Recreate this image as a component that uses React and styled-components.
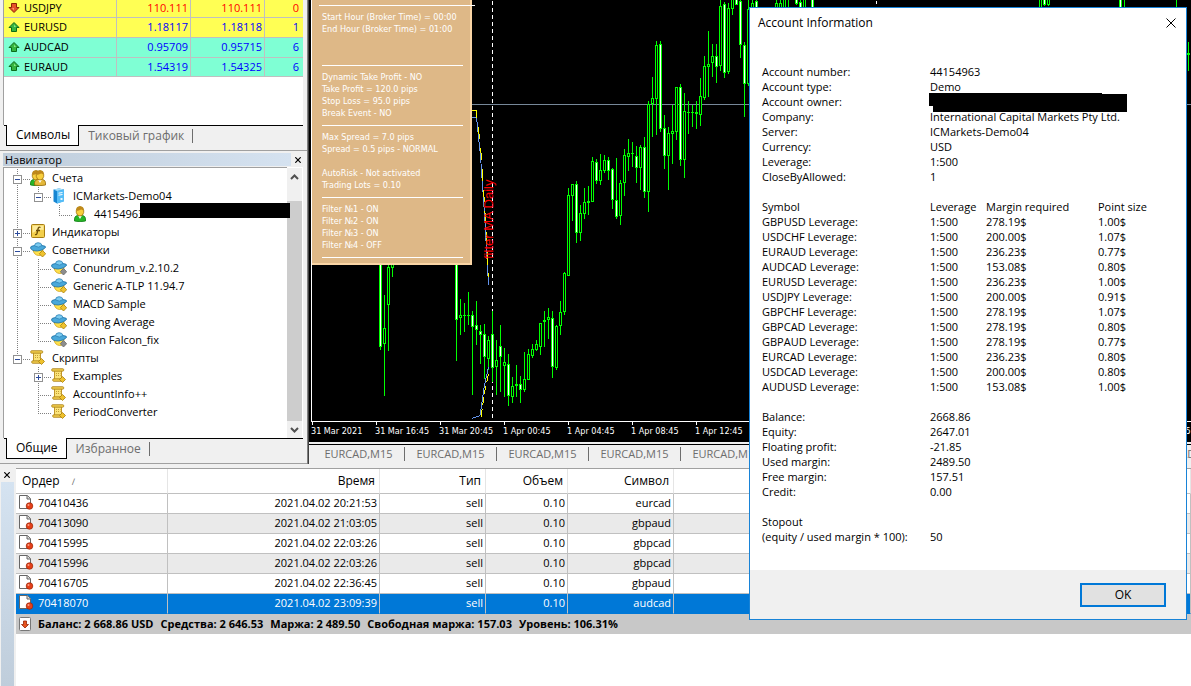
import React from 'react';
import styled, { createGlobalStyle, css } from 'styled-components';

const UI = '"Open Sans", "Noto Sans", "Liberation Sans", sans-serif';
const TAHOMA = '"DejaVu Sans Condensed", "DejaVu Sans", sans-serif';

const GlobalStyle = createGlobalStyle`
  *, *::before, *::after { box-sizing: border-box; }
  body { margin: 0; background: #f0f0f0; color: #000; font: 11px/15px ${UI}; overflow: hidden; }
  button { font: inherit; color: inherit; padding: 0; border: 0; background: none; }
  table { border-collapse: separate; border-spacing: 0; }
  th { font-weight: 400; }
  svg { display: block; flex: none; }
`;

const Page = styled.div`
  position: relative;
  display: flex;
  flex-direction: column;
  min-height: 100vh;
`;
const Top = styled.div`
  display: flex;
  height: 464px;
`;
const Side = styled.aside`
  display: flex;
  flex-direction: column;
  width: 308px;
  flex: none;
  border-right: 1px solid #808080;
`;
const Panel = styled.section`
  display: flex;
  flex-direction: column;
  border-bottom: 1px solid #a0a0a0;
  padding: 0 4px 0 3px;
  ${p => p.$grow && css`flex: 1; min-height: 0;`}
  ${p => p.$height && css`height: ${p.$height}px;`}
`;
const Sheet = styled.div`
  flex: 1;
  min-height: 0;
  display: flex;
  background: #fff;
  border-left: 1px solid #a0a0a0;
`;

const Quotes = styled.table`
  width: 100%;
  align-self: flex-start;
  table-layout: fixed;
`;
const QuoteRow = styled.tr`
  height: ${p => p.$height}px;
  background: ${p => p.$bg};
  color: ${p => p.$ink};
`;
const QuoteCell = styled.td`
  padding: 0 2px 2px 0;
  text-align: right;
  border-bottom: 1px solid #c0c0c0;
  & + & { border-left: 1px solid #c0c0c0; }
  &:last-child { padding-right: 4px; }
`;
const SymbolName = styled.div`
  display: flex;
  align-items: center;
  gap: 4px;
  padding-left: 4px;
  color: #000;
`;

const Tabs = styled.div`
  display: flex;
  height: 25px;
  margin-left: 1px;
  border-top: 1px solid #000;
  padding-left: 2px;
  font-size: 12px;
`;
const Tab = styled.button`
  height: 20px;
  padding: 0 8px 2px 9px;
  color: ${p => (p.$active ? '#000' : '#6d6d6d')};
  ${p => p.$active && css`
    margin-top: -1px;
    height: 21px;
    background: #fff;
    border: 1px solid #000;
    border-top: 0;
  `}
`;
const TabMark = styled.span`
  width: 1px;
  height: 14px;
  margin-top: 3px;
  background: #6d6d6d;
`;

const TitleBar = styled.header`
  display: flex;
  align-items: center;
  height: 13px;
  margin: 2px -2px 1px 0;
`;
const Title = styled.h2`
  flex: 1;
  margin: 0;
  padding-left: 2px;
  font: 11px/13px ${UI};
  background: linear-gradient(90deg, #bfcddb, #d5e2f0);
`;
const CloseMini = styled.button`
  display: grid;
  place-items: center;
  width: 14px;
  height: 13px;
`;

const Tree = styled.ul`
  flex: 1;
  margin: 0;
  padding: 1px 0 0;
  list-style: none;
  border-top: 1px solid #a0a0a0;
`;
const Node = styled.li`
  position: relative;
  display: flex;
  align-items: center;
  height: 18px;
`;
const NodeText = styled.span`
  padding: 0 0 2px 6px;
`;
const NodeCover = styled.span`
  position: absolute;
  left: 136px;
  right: -3px;
  top: -2px;
  height: 15px;
  background: #000;
`;
const ScrollBar = styled.div`
  display: flex;
  flex-direction: column;
  align-items: center;
  justify-content: space-between;
  width: 15px;
  margin: 1px 1px 0 0;
  background: linear-gradient(#f0f0f0 33px, #cdcdcd 33px calc(100% - 17px), #f0f0f0 calc(100% - 17px));
  & > button { height: 17px; display: grid; place-items: center; }
`;

const ChartSide = styled.main`
  flex: 1;
  min-width: 0;
  display: flex;
  flex-direction: column;
  border-left: 1px solid #404040;
`;
const ChartBox = styled.div`
  position: relative;
  flex: 1;
  min-height: 0;
  background: #000;
  padding-left: 2px;
  overflow: hidden;
`;
const Axis = styled.div`
  display: flex;
  height: 20px;
  border-top: 1px solid #fff;
  color: #fff;
  font: 9px/18px ${TAHOMA};
`;
const AxisLabel = styled.span`
  width: 64px;
  flex: none;
  background: linear-gradient(#fff, #fff) 1px 0 / 1px 3px no-repeat;
`;
const InfoPanel = styled.div`
  position: absolute;
  left: 3px;
  top: 0;
  width: 160px;
  padding: 0 0 0 10px;
  color: #fff;
  background: #deb887;
  border: solid #fad5a5;
  border-width: 0 2px 2px 0;
  font: 9px/12px ${TAHOMA};
  white-space: nowrap;
`;
const InfoLine = styled.div`
  height: 12px;
`;
const InfoRule = styled.div`
  height: 12px;
  width: 141px;
  background: linear-gradient(#fff, #fff) 0 6px / 100% 1px no-repeat;
  ${p => p.$first && css`height: 11px; width: 156px; margin-left: -3px; background-position-y: 5px;`}
`;
const ChartTabs = styled.nav`
  display: flex;
  align-items: center;
  height: 22px;
  padding-left: 4px;
  overflow: hidden;
  border-top: 2px solid #f0f0f0;
  box-shadow: inset 0 1px #000;
`;
const ChartTab = styled.button`
  flex: none;
  width: 92px;
  height: 14px;
  line-height: 14px;
  color: #6d6d6d;
  border-right: 1px solid #6d6d6d;
`;

const Terminal = styled.section`
  flex: 1;
  display: flex;
  margin-top: 4px;
`;
const TerminalGrip = styled.div`
  width: 16px;
  flex: none;
  padding-right: 2px;
  &::after {
    content: '';
    display: block;
    height: calc(100% - 14px);
    margin: 1px 0 0 1px;
    background: linear-gradient(#d5e3f1, #bfcddb);
  }
`;
const TerminalSheet = styled.div`
  flex: 1;
  min-width: 0;
  background: #fff;
  border-top: 1px solid #a0a0a0;
`;
const Orders = styled.table`
  width: 100%;
  table-layout: fixed;
`;
const OrderHead = styled.th`
  height: 25px;
  padding: 0 4px 1px 6px;
  font-size: 12px;
  text-align: ${p => (p.$left ? 'left' : 'right')};
  border-right: 1px solid #e5e5e5;
  border-bottom: 1px solid #c0c0c0;
`;
const OrderRow = styled.tr`
  background: ${p => (p.$selected ? '#0078d7' : p.$odd ? '#eaeaea' : '#fff')};
  color: ${p => (p.$selected ? '#fff' : '#000')};
`;
const OrderCell = styled.td`
  height: 20px;
  padding: 0 2px 2px 3px;
  text-align: right;
  border: solid #c0c0c0;
  border-width: 0 1px 1px 0;
  ${p => p.$selected && css`border-bottom-color: #0078d7;`}
`;
const OrderId = styled.div`
  display: flex;
  align-items: center;
  gap: 4px;
`;
const SortMark = styled.span`
  margin-left: 12px;
  font-size: 9px;
  color: #6d6d6d;
`;
const Summary = styled.div`
  display: flex;
  align-items: center;
  gap: 7px;
  height: 20px;
  padding: 0 0 1px 3px;
  background: #c8c8c8;
  font-weight: 700;
  white-space: nowrap;
  svg { margin-right: -1px; }
`;

const Dialog = styled.div`
  position: absolute;
  top: 7px;
  right: 4px;
  width: 438px;
  background: #fff;
  border: 1px solid #1883d7;
`;
const DialogHead = styled.header`
  display: flex;
  align-items: center;
  justify-content: space-between;
  height: 30px;
  padding: 0 10px 0 8px;
`;
const DialogTitle = styled.h1`
  margin: 0;
  font: 12px/16px ${UI};
`;
const DialogBody = styled.div`
  display: flex;
  flex-direction: column;
  gap: 15px;
  padding: 26px 12px;
`;
const Facts = styled.dl`
  display: grid;
  grid-template-columns: 168px 1fr;
  margin: 0;
  dt, dd { margin: 0; height: 15px; white-space: nowrap; }
`;
const OwnerValue = styled.dd`
  position: relative;
  svg { position: absolute; left: -1px; top: -1px; }
`;
const Leverage = styled.table`
  table-layout: fixed;
  width: 100%;
  th, td { padding: 0; height: 15px; text-align: left; white-space: nowrap; }
`;
const DialogFoot = styled.footer`
  display: flex;
  justify-content: flex-end;
  padding: 13px 20px 12px;
  background: #f0f0f0;
`;
const OkButton = styled.button`
  width: 86px;
  height: 24px;
  background: #e1e1e1;
  border: 2px solid #0078d7;
  font-size: 12px;
  line-height: 16px;
`;

const quotes = [
  { name: 'USDJPY', bid: '110.111', ask: '110.111', spread: '0', down: true, bg: '#ffff54', h: 18 },
  { name: 'EURUSD', bid: '1.18117', ask: '1.18118', spread: '1', bg: '#ffff54', h: 20 },
  { name: 'AUDCAD', bid: '0.95709', ask: '0.95715', spread: '6', bg: '#7fffd4', h: 20 },
  { name: 'EURAUD', bid: '1.54319', ask: '1.54325', spread: '6', bg: '#7fffd4', h: 19 },
];

const nodes = [
  { t: 'Счета', d: 0, icon: 'users', box: '-' },
  { t: 'ICMarkets-Demo04', d: 1, icon: 'server', box: '-', last: true },
  { t: '44154963', d: 2, icon: 'user', last: true, covered: true },
  { t: 'Индикаторы', d: 0, icon: 'func', box: '+' },
  { t: 'Советники', d: 0, icon: 'expert', box: '-' },
  { t: 'Conundrum_v.2.10.2', d: 1, icon: 'expertGray' },
  { t: 'Generic A-TLP 11.94.7', d: 1, icon: 'expert' },
  { t: 'MACD Sample', d: 1, icon: 'expert' },
  { t: 'Moving Average', d: 1, icon: 'expert' },
  { t: 'Silicon Falcon_fix', d: 1, icon: 'expertGray', last: true },
  { t: 'Скрипты', d: 0, icon: 'script', box: '-', last: true },
  { t: 'Examples', d: 1, icon: 'script', box: '+', rootDone: true },
  { t: 'AccountInfo++', d: 1, icon: 'script', rootDone: true },
  { t: 'PeriodConverter', d: 1, icon: 'script', last: true, rootDone: true },
];

const orders = [
  ['70410436', '2021.04.02 20:21:53', 'eurcad'],
  ['70413090', '2021.04.02 21:03:05', 'gbpaud'],
  ['70415995', '2021.04.02 22:03:26', 'gbpcad'],
  ['70415996', '2021.04.02 22:03:26', 'gbpcad'],
  ['70416705', '2021.04.02 22:36:45', 'gbpaud'],
  ['70418070', '2021.04.02 23:09:39', 'audcad'],
];

const leverage = [
  ['GBPUSD', '278.19$', '1.00$'],
  ['USDCHF', '200.00$', '1.07$'],
  ['EURAUD', '236.23$', '0.77$'],
  ['AUDCAD', '153.08$', '0.80$'],
  ['EURUSD', '236.23$', '1.00$'],
  ['USDJPY', '200.00$', '0.91$'],
  ['GBPCHF', '278.19$', '1.07$'],
  ['GBPCAD', '278.19$', '0.80$'],
  ['GBPAUD', '278.19$', '0.77$'],
  ['EURCAD', '236.23$', '0.80$'],
  ['USDCAD', '200.00$', '0.80$'],
  ['AUDUSD', '153.08$', '1.00$'],
];

const infoLines = [
  '--', 'Start Hour (Broker Time) = 00:00', 'End Hour (Broker Time) = 01:00', '', '', '-',
  'Dynamic Take Profit - NO', 'Take Profit = 120.0 pips', 'Stop Loss = 95.0 pips', 'Break Event - NO', '-',
  'Max Spread = 7.0 pips', 'Spread = 0.5 pips - NORMAL', '', 'AutoRisk - Not activated', 'Trading Lots = 0.10', '-',
  'Filter №1 - ON', 'Filter №2 - ON', 'Filter №3 - ON', 'Filter №4 - OFF', '-',
];

const times = ['31 Mar 2021', '31 Mar 16:45', '31 Mar 20:45', '1 Apr 00:45', '1 Apr 04:45', '1 Apr 08:45', '1 Apr 12:45',
  '', '', '', '', '', '', '2 Apr 16:45'];

// x, high, low, body top, body bottom, falling
const candles = [
  [380, 240, 349, 250, 346, 1], [384, 295, 395, 328, 343], [388, 250, 350, 267, 304], [392, 250, 276, 255, 267],
  [456, 240, 360, 250, 319, 1], [460, 299, 334, 315, 317], [464, 303, 331, 315, 315], [468, 292, 324, 315, 315],
  [472, 311, 394, 315, 326, 1], [476, 301, 344, 325, 329, 1], [480, 325, 363, 331, 334, 1], [484, 324, 378, 334, 356, 1],
  [488, 336, 369, 340, 358], [492, 311, 381, 334, 367, 1], [496, 340, 394, 360, 366], [500, 325, 391, 346, 356, 1],
  [504, 348, 396, 362, 365], [508, 354, 405, 364, 395, 1], [512, 377, 402, 386, 396], [516, 365, 396, 384, 385],
  [520, 376, 402, 384, 389, 1], [524, 352, 391, 379, 389], [528, 349, 379, 354, 379], [532, 344, 357, 349, 355],
  [536, 340, 350, 344, 349], [540, 323, 354, 323, 346], [544, 311, 346, 320, 321], [548, 308, 338, 317, 319],
  [552, 311, 377, 318, 366, 1], [556, 325, 369, 326, 367], [560, 301, 334, 312, 325], [564, 272, 314, 273, 311],
  [568, 188, 275, 195, 275], [572, 184, 220, 184, 195], [576, 181, 242, 184, 232, 1], [580, 205, 240, 213, 232],
  [584, 188, 218, 202, 213], [588, 186, 214, 201, 202], [592, 157, 201, 161, 201], [596, 159, 183, 162, 180, 1],
  [600, 154, 184, 170, 180], [604, 155, 172, 160, 170], [608, 157, 179, 160, 170, 1], [612, 168, 208, 169, 199, 1],
  [616, 158, 218, 200, 216, 1], [620, 180, 224, 183, 215], [624, 149, 195, 155, 182], [628, 139, 170, 153, 156],
  [632, 142, 166, 153, 153], [636, 146, 182, 156, 167, 1], [640, 145, 189, 147, 167], [644, 137, 197, 147, 191, 1],
  [648, 101, 211, 104, 191], [652, 77, 136, 98, 103], [656, 41, 134, 45, 98], [660, 41, 131, 44, 128, 1],
  [664, 115, 168, 128, 155, 1], [668, 127, 189, 133, 155], [672, 105, 163, 131, 133], [676, 87, 139, 87, 131],
  [680, 84, 165, 87, 159, 1], [684, 93, 177, 111, 159], [688, 101, 133, 112, 112], [692, 105, 126, 112, 112],
  [696, 101, 128, 112, 113], [700, 78, 125, 96, 114], [704, 56, 99, 66, 97], [708, 31, 96, 64, 66],
  [712, 44, 76, 56, 62], [716, 44, 82, 56, 66, 1], [720, 0, 70, 6, 65], [724, 2, 77, 4, 72, 1],
  [728, 3, 73, 8, 71], [732, -5, 14, -3, 8], [736, -5, 4, -3, 4, 1], [740, 0, 57, 1, 44, 1],
  [744, 42, 116, 45, 83, 1], [748, -5, 85, 9, 83], [752, -5, 20, 3, 20], [756, -5, 20, 1, 20, 1],
  [776, -5, 20, 3, 20], [780, -5, 20, 3, 20], [784, -5, 20, -3, 20], [788, -5, 20, 20, 20], [796, -5, 4, -3, 3, 1],
  [800, -5, 20, 2, 20, 1], [804, -5, 20, -3, 20], [812, -5, 20, -3, 20, 1], [1040, -5, 20, -3, 20],
  [1044, -5, 5, -3, 4, 1], [1048, -5, 5, -3, 4], [1120, -5, 20, -3, 20, 1], [1124, -5, 20, 20, 20],
  [1176, -5, 20, 20, 20], [1188, 42, 70, 53, 54],
];

function Chart() {
  return (
    <svg width="100%" height="421" shapeRendering="crispEdges">
      <g transform="translate(-311 0)">
        <path d="M311 0h1v421h-1z" fill="#fff" />
        <path d="M312 104.500h1200" stroke="#778899" />
        <path d="M492.500 1V420" stroke="#fff" strokeDasharray="4 3" />
        <path d="M876.500 1V4" stroke="#fff" />
        {candles.map(([x, hi, lo, top, bot, falling]) => (
          <g key={x}>
            <rect x={x} y={hi} width="1" height={lo - hi + 1} fill="#00ff00" />
            <rect x={x - 1} y={top} width="3" height={bot - top + 1} fill="#00ff00" />
            {bot - top > 1 && <rect x={x} y={top + 1} width="1" height={bot - top - 1} fill={falling ? '#fff' : '#000'} />}
          </g>
        ))}
        <g fill="none">
          <path d="M472 117.500H476.500L480.500 156L484.500 214L488.500 285M472 418.500L480 415.500L484.500 385L488.500 367" stroke="#6495ed" />
          <path d="M472 110.500H476.500V116L480.500 145L484.500 204L488.500 277" stroke="#ff0" strokeDasharray="12 9" />
          <path d="M488.500 374L485 390L480.500 420" stroke="#ff0" strokeDasharray="8 4" />
        </g>
      </g>
      <text transform="translate(182 259) rotate(-90)" fill="#f00" fontFamily="Liberation Sans, sans-serif" fontSize="13">filter MA Daily</text>
    </svg>
  );
}

function Arrow({ down }) {
  return (
    <svg width="12" height="12" viewBox="0 0 12 12">
      <g transform={down ? 'rotate(180 6 6)' : undefined}>
        <path d="M6 1.500L11 6.500H8.500V10.500H3.500V6.500H1z" fill={down ? '#e5532a' : '#35b540'} stroke={down ? '#8c2408' : '#0c6b1b'} />
        <path d="M6 3.500L8 6H6z" fill={down ? '#ff9b70' : '#8be88b'} />
      </g>
    </svg>
  );
}

function Person({ x = 0, shirt = '#27b527', edge = '#0d7d12' }) {
  return (
    <g transform={`translate(${x} 0)`}>
      <path d="M1.500 15Q1 10 4.500 9.500H9.500Q13 10 12.500 15Q7 16.500 1.500 15z" fill={shirt} stroke={edge} strokeWidth=".8" />
      <path d="M5 9.500L7 13L9 9.500z" fill="#fff" />
      <path d="M3.300 4.500Q3.300 .5 7 .5T10.700 4.500V6.500Q10 10 7 10T3.300 6.500z" fill="#f8cf3c" stroke="#a0720a" strokeWidth=".8" />
      <path d="M3.500 5Q3.300 .7 7 .7T10.500 5Q9 2.800 7.500 3.800T3.500 5z" fill="#c0881a" />
    </g>
  );
}

function NodeIcon({ kind }) {
  const gray = kind === 'expertGray';
  return (
    <svg width="16" height="16" viewBox="0 0 16 16">
      {kind === 'users' && <><Person x={-1} /><Person x={3} shirt="#e4b83a" edge="#94690b" /></>}
      {kind === 'user' && <Person x={1} />}
      {kind === 'server' && (
        <>
          <path d="M2.500 1.500L8 .5L13 1.500V13L6 15.500L2.500 13.500z" fill="#1786d2" />
          <path d="M6 3L13 1.800V13.500L6 15.500z" fill="#55bdf7" />
          <path d="M2.500 1.500L8 .5L13 1.500L6 3z" fill="#a5dffb" />
          <path d="M7.500 5.200L11.500 4.500M7.500 7.200L11.500 6.500" stroke="#fff" />
          <path d="M9.500 10H11.500V12H9.500z" fill="#e9f7ff" />
        </>
      )}
      {kind === 'func' && (
        <>
          <rect x="1.500" y=".5" width="13" height="13" rx="1" fill="#f3cf4b" stroke="#a67c12" />
          <path d="M2.500 1.500H13.500V6Q8 5 2.500 9z" fill="#fdeb9c" />
          <path d="M10.500 3.500Q8.500 2.500 8 5L7 9.500Q6.500 11 5 10.500M6 6.500H10" fill="none" stroke="#6b4d05" strokeWidth="1.300" />
        </>
      )}
      {kind.startsWith('expert') && (
        <>
          <path d="M3 8Q4 13 8.500 13.500T13 7z" fill="#ffe04a" stroke="#d0a21a" strokeWidth=".8" />
          <path d="M.5 6Q0 4 4.500 3.500H12Q16.500 4 15.500 5.500Q13 8.500 7.500 9Q1.500 9 .5 6z" fill="#49a8da" stroke="#1d6fa3" strokeWidth=".8" />
          <path d="M4.500 4Q4.500 .7 8 .7T12 3.500Q9 6.500 4.500 4z" fill="#7ccbf0" stroke="#2a80b5" strokeWidth=".8" />
          <path d="M12.500 8.500L15.700 11.700L12.500 15L9.300 11.700z" fill={gray ? '#8d8d8d' : '#f0c32e'} stroke={gray ? '#696969' : '#a97f0a'} strokeWidth=".8" />
        </>
      )}
      {kind === 'script' && (
        <>
          <path d="M3.500 2.500H10.500V11.500H3.500z" fill="#fbe47a" stroke="#c0952a" />
          <rect x=".7" y=".7" width="12" height="2.500" rx="1" fill="#f0cb4a" stroke="#a87f16" strokeWidth=".8" />
          <rect x="1.700" y="10.800" width="10" height="2.500" rx="1" fill="#f0cb4a" stroke="#a87f16" strokeWidth=".8" />
          <path d="M5 5.500H9.500M5 7.500H9.500" stroke="#c39d35" strokeDasharray="1 1" />
          <path d="M11.500 8.500L14.500 11.500L11.500 14.500L8.500 11.500z" fill="#efc12c" stroke="#a97f0a" strokeWidth=".8" />
        </>
      )}
    </svg>
  );
}

function Guide({ node }) {
  const { d, last, box, rootDone } = node;
  const x = 13 + 21 * d;
  const dots = { stroke: '#808080', strokeDasharray: '1 1' };
  return (
    <svg width={26 + 21 * d} height="18" shapeRendering="crispEdges">
      {d > 0 && !rootDone && <path d="M13.500 0V18" {...dots} />}
      <path d={`M${x + 0.5} 0V${last ? 11 : 18}M${x} 10.500H${x + 13}`} {...dots} />
      {box && (
        <>
          <rect x={x - 3.5} y="6.500" width="8" height="8" fill="#fff" stroke="#919191" />
          <path d={`M${x - 2} 10.500H${x + 3}${box === '+' ? `M${x + 0.5} 8V13` : ''}`} stroke="#2c4b9c" />
        </>
      )}
    </svg>
  );
}

function Cross({ size, weight }) {
  return (
    <svg width={size} height={size} viewBox="0 0 10 10">
      <path d="M.5 .5L9.500 9.500M9.500 .5L.5 9.500" stroke="#000" strokeWidth={weight} />
    </svg>
  );
}

function Chevron({ down }) {
  return (
    <svg width="9" height="6" viewBox="0 0 9 6">
      <path d={down ? 'M1 1L4.500 4.500L8 1' : 'M1 5L4.500 1.500L8 5'} fill="none" stroke="#505050" strokeWidth="2" />
    </svg>
  );
}

function OrderIcon() {
  return (
    <svg width="15" height="15" viewBox="0 0 15 15">
      <path d="M.5 .5H8.500L11.500 3.500V13.500H.5z" fill="#fff" stroke="#666" />
      <path d="M8 .5V4H11.500" fill="#ddd" stroke="#666" />
      <circle cx="10.500" cy="11" r="3.300" fill="#e5401a" stroke="#982405" strokeWidth=".7" />
      <circle cx="9.500" cy="10" r="1" fill="#ffa184" />
    </svg>
  );
}

function BalanceIcon() {
  return (
    <svg width="13" height="14" viewBox="0 0 13 14">
      <rect x=".5" y=".5" width="11" height="13" rx="1" fill="#fff" stroke="#777" />
      <path d="M6 11L2.500 7.500H4.500V4H7.500V7.500H9.500z" fill="#e8541f" stroke="#982405" strokeWidth=".8" />
    </svg>
  );
}

export default function App() {
  return (
    <Page>
      <GlobalStyle />
      <Top>
        <Side>
          <Panel $height={151}>
            <Sheet>
              <Quotes>
                <colgroup><col width="112" /><col width="74" /><col width="74" /><col /></colgroup>
                <tbody>
                  {quotes.map(q => (
                    <QuoteRow key={q.name} $height={q.h} $bg={q.bg} $ink={q.down ? '#f00' : '#00f'}>
                      <QuoteCell><SymbolName><Arrow down={q.down} />{q.name}</SymbolName></QuoteCell>
                      <QuoteCell>{q.bid}</QuoteCell>
                      <QuoteCell>{q.ask}</QuoteCell>
                      <QuoteCell>{q.spread}</QuoteCell>
                    </QuoteRow>
                  ))}
                </tbody>
              </Quotes>
            </Sheet>
            <Tabs><Tab $active>Символы</Tab><Tab>Тиковый график</Tab><TabMark /></Tabs>
          </Panel>
          <Panel $grow>
            <TitleBar>
              <Title>Навигатор</Title>
              <CloseMini aria-label="Закрыть"><Cross size={6} weight={2} /></CloseMini>
            </TitleBar>
            <Sheet>
              <Tree>
                {nodes.map(n => (
                  <Node key={n.t}>
                    <Guide node={n} />
                    <NodeIcon kind={n.icon} />
                    <NodeText>{n.t}</NodeText>
                    {n.covered && <NodeCover />}
                  </Node>
                ))}
              </Tree>
              <ScrollBar>
                <button aria-label="Вверх"><Chevron /></button>
                <button aria-label="Вниз"><Chevron down /></button>
              </ScrollBar>
            </Sheet>
            <Tabs><Tab $active>Общие</Tab><Tab>Избранное</Tab><TabMark /></Tabs>
          </Panel>
        </Side>
        <ChartSide>
          <ChartBox>
            <Chart />
            <Axis>{times.map((t, i) => <AxisLabel key={i}>{t}</AxisLabel>)}</Axis>
            <InfoPanel>
              {infoLines.map((line, i) => (line[0] === '-'
                ? <InfoRule key={i} $first={line === '--'} />
                : <InfoLine key={i}>{line}</InfoLine>))}
            </InfoPanel>
          </ChartBox>
          <ChartTabs>
            {times.slice(0, 10).map((t, i) => <ChartTab key={i}>EURCAD,M15</ChartTab>)}
          </ChartTabs>
        </ChartSide>
      </Top>
      <Terminal>
        <TerminalGrip>
          <CloseMini aria-label="Закрыть"><Cross size={6} weight={2} /></CloseMini>
        </TerminalGrip>
        <TerminalSheet>
          <Orders>
            <colgroup><col width="152" /><col width="212" /><col width="106" /><col width="82" /><col width="106" /><col /></colgroup>
            <thead>
              <tr>
                <OrderHead $left>Ордер<SortMark>∕</SortMark></OrderHead>
                <OrderHead>Время</OrderHead>
                <OrderHead>Тип</OrderHead>
                <OrderHead>Объем</OrderHead>
                <OrderHead>Символ</OrderHead>
                <OrderHead />
              </tr>
            </thead>
            <tbody>
              {orders.map(([id, time, symbol], i) => {
                const selected = i === orders.length - 1;
                return (
                  <OrderRow key={id} $odd={i % 2 === 1} $selected={selected}>
                    <OrderCell $selected={selected}><OrderId><OrderIcon />{id}</OrderId></OrderCell>
                    <OrderCell $selected={selected}>{time}</OrderCell>
                    <OrderCell $selected={selected}>sell</OrderCell>
                    <OrderCell $selected={selected}>0.10</OrderCell>
                    <OrderCell $selected={selected}>{symbol}</OrderCell>
                    <OrderCell $selected={selected} />
                  </OrderRow>
                );
              })}
            </tbody>
          </Orders>
          <Summary>
            <BalanceIcon />
            <span>Баланс: 2 668.86 USD</span>
            <span>Средства: 2 646.53</span>
            <span>Маржа: 2 489.50</span>
            <span>Свободная маржа: 157.03</span>
            <span>Уровень: 106.31%</span>
          </Summary>
        </TerminalSheet>
      </Terminal>
      <Dialog role="dialog" aria-labelledby="dialog-title">
        <DialogHead>
          <DialogTitle id="dialog-title">Account Information</DialogTitle>
          <button aria-label="Close"><Cross size={10} weight={1} /></button>
        </DialogHead>
        <DialogBody>
          <Facts>
            <dt>Account number:</dt><dd>44154963</dd>
            <dt>Account type:</dt><dd>Demo</dd>
            <dt>Account owner:</dt>
            <OwnerValue><svg width="198" height="19"><path d="M0 0H173V1H198V19H4V13H0z" /></svg></OwnerValue>
            <dt>Company:</dt><dd>International Capital Markets Pty Ltd.</dd>
            <dt>Server:</dt><dd>ICMarkets-Demo04</dd>
            <dt>Currency:</dt><dd>USD</dd>
            <dt>Leverage:</dt><dd>1:500</dd>
            <dt>CloseByAllowed:</dt><dd>1</dd>
          </Facts>
          <Leverage>
            <colgroup><col width="168" /><col width="56" /><col width="112" /><col /></colgroup>
            <thead>
              <tr><th>Symbol</th><th>Leverage</th><th>Margin required</th><th>Point size</th></tr>
            </thead>
            <tbody>
              {leverage.map(([symbol, margin, point]) => (
                <tr key={symbol}><td>{symbol} Leverage:</td><td>1:500</td><td>{margin}</td><td>{point}</td></tr>
              ))}
            </tbody>
          </Leverage>
          <Facts>
            <dt>Balance:</dt><dd>2668.86</dd>
            <dt>Equity:</dt><dd>2647.01</dd>
            <dt>Floating profit:</dt><dd>-21.85</dd>
            <dt>Used margin:</dt><dd>2489.50</dd>
            <dt>Free margin:</dt><dd>157.51</dd>
            <dt>Credit:</dt><dd>0.00</dd>
          </Facts>
          <Facts>
            <dt>Stopout</dt><dd />
            <dt>(equity / used margin * 100):</dt><dd>50</dd>
          </Facts>
        </DialogBody>
        <DialogFoot><OkButton>OK</OkButton></DialogFoot>
      </Dialog>
    </Page>
  );
}
